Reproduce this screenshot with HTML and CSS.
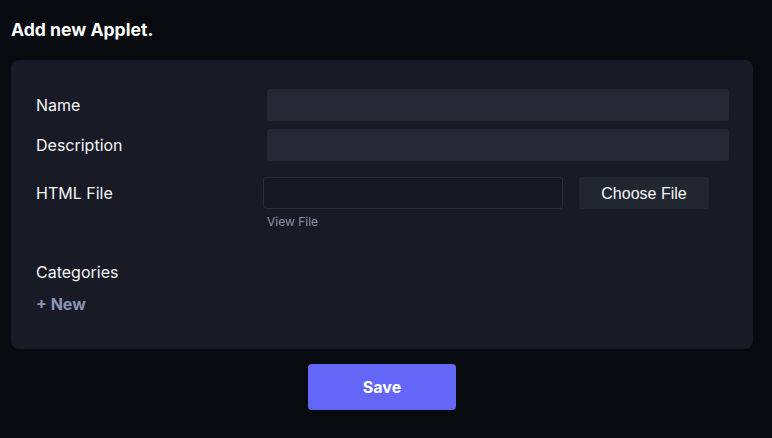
FILE: index.html
```html
<!DOCTYPE html>
<html lang="en">
<head>
    <meta charset="UTF-8">
    <meta name="viewport" content="width=device-width, initial-scale=1.0">
    <title>Add new Applet</title>
    <link rel="stylesheet" href="styles.css">
</head>
<body>
    <main class="page">
        <h1 class="page-title">Add new Applet.</h1>

        <form class="applet-form">
            <div class="form-card">
                <div class="form-row">
                    <label class="form-label" for="name">Name</label>
                    <input class="text-input" type="text" id="name">
                </div>
                <div class="form-row">
                    <label class="form-label" for="description">Description</label>
                    <input class="text-input" type="text" id="description">
                </div>
                <div class="form-row file-row">
                    <label class="form-label">HTML File</label>
                    <div class="file-field">
                        <div class="file-controls">
                            <div class="file-box"></div>
                            <button type="button" class="choose-button">Choose File</button>
                        </div>
                        <a class="view-file" href="#">View File</a>
                    </div>
                </div>

                <!-- Categories -->
                <div class="categories">
                    <div class="form-label">Categories</div>
                    <a class="new-category" href="#">+ New</a>
                </div>
            </div>

            <div class="form-actions">
                <button type="submit" class="save-button">Save</button>
            </div>
        </form>
    </main>
</body>
</html>
```

FILE: styles.css
```css
body {
  margin: 0;
  padding: 0;
  background-color: #070a0f;
  color: #f4f5f8;
  font-family: Inter, "Noto Sans", sans-serif;
}

.page {
  padding: 20px 19px 0 11px;
}

.page-title {
  margin: 0 0 20px;
  font-size: 17.6px;
  font-weight: 700;
  line-height: 20px;
  color: #ffffff;
}

/* Card */
.form-card {
  background-color: #181a25;
  border-radius: 8px;
  padding: 29px 24px 35px 25px;
}

.form-row {
  display: flex;
  align-items: center;
  margin-bottom: 8px;
}

.form-label {
  width: 231px;
  flex-shrink: 0;
  font-size: 16px;
  line-height: 20px;
  color: #f4f5f8;
}

.text-input {
  flex: 1;
  height: 32px;
  box-sizing: border-box;
  border: none;
  border-radius: 3px;
  background-color: #232834;
  color: #fff;
  padding: 0 10px;
  font: inherit;
}

/* File field */
.file-row {
  align-items: flex-start;
  margin-top: 16px;
}

.file-row .form-label {
  line-height: 32px;
}

.file-field {
  flex: 1;
}

.file-controls {
  display: flex;
  align-items: center;
}

.file-box {
  width: 298px;
  height: 30px;
  margin-left: -4px;
  border: 1px solid #292d39;
  border-radius: 3px;
  background-color: #161821;
}

.choose-button {
  margin-left: 16px;
  width: 130px;
  height: 32px;
  padding-top: 2px;
  border: none;
  border-radius: 3px;
  background-color: #222630;
  color: #f4f5f8;
  font-family: "Liberation Sans", Arial, sans-serif;
  font-size: 16px;
  cursor: pointer;
}

.view-file {
  display: inline-block;
  margin-top: 6px;
  font-size: 12px;
  line-height: 14px;
  color: #8d92ab;
  text-decoration: none;
}

/* Categories */
.categories {
  margin-top: 32px;
}

.new-category {
  display: inline-block;
  margin-top: 13px;
  font-size: 16px;
  font-weight: 700;
  line-height: 19px;
  color: #8b93b5;
  text-decoration: none;
}

/* Actions */
.form-actions {
  display: flex;
  justify-content: center;
  padding-top: 15px;
}

.save-button {
  width: 148px;
  height: 46px;
  border: none;
  border-radius: 4px;
  background-color: #6366f6;
  color: #ffffff;
  font-family: Inter, "Noto Sans", sans-serif;
  font-size: 16px;
  font-weight: 700;
  cursor: pointer;
}
```
